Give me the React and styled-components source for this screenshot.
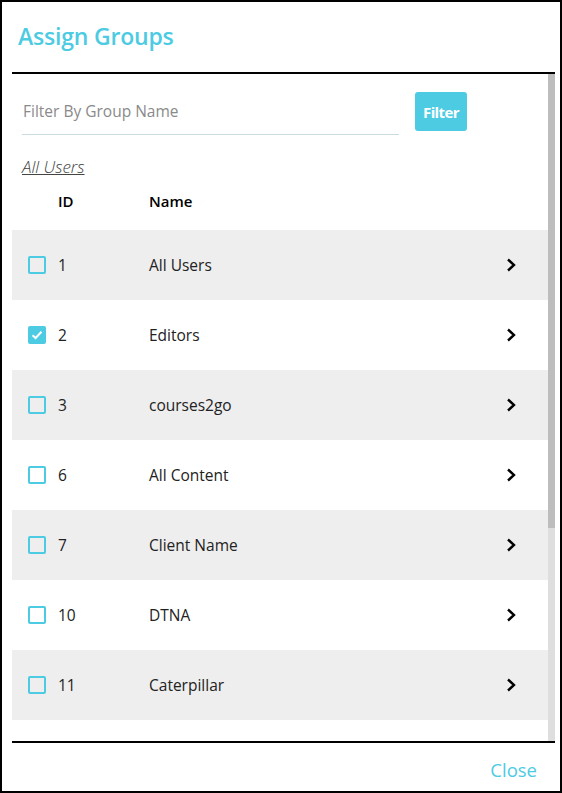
import React, { useState } from 'react';
import styled, { createGlobalStyle } from 'styled-components';

const Global = createGlobalStyle`
  html, body { margin:0; padding:0; background:#fff; }
  * { box-sizing:border-box; }
  body { font-family:"Open Sans", "Liberation Sans", sans-serif; }
`

const Modal = styled.div`
  width:562px;
  height:793px;
  border:2px solid #000;
  display:flex;
  flex-direction:column;
  background:#fff;
`
const Header = styled.div`
  height:70px;
  display:flex;
  align-items:center;
  padding-left:16px;
  padding-bottom:2px;
`
const Title = styled.h1`
  margin:0;
  font-size:23px;
  font-weight:600;
  color:#4ccbe3;
  letter-spacing:-0.2px;
`
const Body = styled.div`
  height:671px;
  margin:0 5px 0 10px;
  border-top:2px solid #000;
  border-bottom:2px solid #000;
  display:flex;
`
const Viewport = styled.div`
  flex:1;
  overflow:hidden;
`
const Track = styled.div`
  width:7px;
  background:#dedede;
`
const Thumb = styled.div`
  height:454px;
  background:#bdbdbd;
`
const FilterRow = styled.div`
  display:flex;
  align-items:flex-start;
  padding:18px 10px 0 10px;
`
const Input = styled.input`
  width:377px;
  height:43px;
  border:none;
  border-bottom:1px solid #c9dbde;
  font-family:inherit;
  font-size:15.5px;
  color:#333;
  padding:0 1px 4px 1px;
  outline:none;
  &::placeholder{ color:#8a8a8a; }
`
const FilterButton = styled.button`
  margin-left:16px;
  width:52px;
  height:39px;
  border:none;
  border-radius:3px;
  background:#4ccbe3;
  color:#fff;
  font-family:inherit;
  font-weight:700;
  font-size:15px;
  letter-spacing:-0.6px;
  padding:0;
`
const Crumb = styled.a`
  display:inline-block;
  margin:20px 0 0 10px;
  font-size:17px;
  font-weight:300;
  font-style:italic;
  color:#444;
  text-decoration:underline;
`
const HeadRow = styled.div`
  display:flex;
  align-items:center;
  height:34px;
  margin:6px 0 12px 0;
  font-size:15px;
  font-weight:600;
  color:#000;
`
const HeadCell = styled.div`
  width:${p => p.$w ? p.$w + 'px' : 'auto'};
  padding-left:${p => p.$pad || 0}px;
`
const Row = styled.div`
  display:flex;
  align-items:center;
  height:70px;
  background:${p => p.$alt ? '#eeeeee' : '#fff'};
  padding:0 31px 0 16px;
  font-size:15.5px;
  color:#222;
`
const Box = styled.span`
  width:18px;
  height:18px;
  border:2px solid #4ccbe3;
  border-radius:2px;
  background:${p => p.$on ? '#4ccbe3' : 'transparent'};
  display:flex;
  align-items:center;
  justify-content:center;
  margin-right:12px;
  flex-shrink:0;
`
const Id = styled.span`
  width:91px;
`
const Name = styled.span`
  flex:1;
`
const Chevron = styled.svg`
  width:12px;
  height:16px;
`
const Footer = styled.div`
  flex:1;
  display:flex;
  align-items:center;
  justify-content:flex-end;
  padding-right:23px;
  padding-top:4px;
`
const Close = styled.span`
  font-size:18.5px;
  color:#4ccbe3;
`

const groups = [
  { id:1, name:'All Users' },
  { id:2, name:'Editors', on:true },
  { id:3, name:'courses2go' },
  { id:6, name:'All Content' },
  { id:7, name:'Client Name' },
  { id:10, name:'DTNA' },
  { id:11, name:'Caterpillar' },
]

function App(){
  const [checked, setChecked] = useState(groups.filter(g => g.on).map(g => g.id))
  function toggle(id){
    checked.includes(id) ?
    setChecked(checked.filter(c => c !== id)) : setChecked([...checked, id])
  }
  return(
    <Modal>
      <Global/>
      <Header><Title>Assign Groups</Title></Header>
      <Body>
        <Viewport>
          <FilterRow>
            <Input placeholder="Filter By Group Name"/>
            <FilterButton>Filter</FilterButton>
          </FilterRow>
          <Crumb>All Users</Crumb>
          <HeadRow>
            <HeadCell $w={137} $pad={46}>ID</HeadCell>
            <HeadCell>Name</HeadCell>
          </HeadRow>
          {groups.map((g, i) => (
            <Row key={g.id} $alt={i % 2 === 0} onClick={() => toggle(g.id)}>
              <Box $on={checked.includes(g.id)}>
                {checked.includes(g.id) ?
                  <svg width="12" height="10" viewBox="0 0 12 10"><path d="M1.5 5.2 L4.6 8 L10.5 1.8" fill="none" stroke="#fff" strokeWidth="2"/></svg> : null}
              </Box>
              <Id>{g.id}</Id>
              <Name>{g.name}</Name>
              <Chevron viewBox="0 0 12 16"><path d="M3 2.5 L9 8 L3 13.5" fill="none" stroke="#000" strokeWidth="2.4"/></Chevron>
            </Row>
          ))}
        </Viewport>
        <Track><Thumb/></Track>
      </Body>
      <Footer><Close>Close</Close></Footer>
    </Modal>
  )
}

export default App;
